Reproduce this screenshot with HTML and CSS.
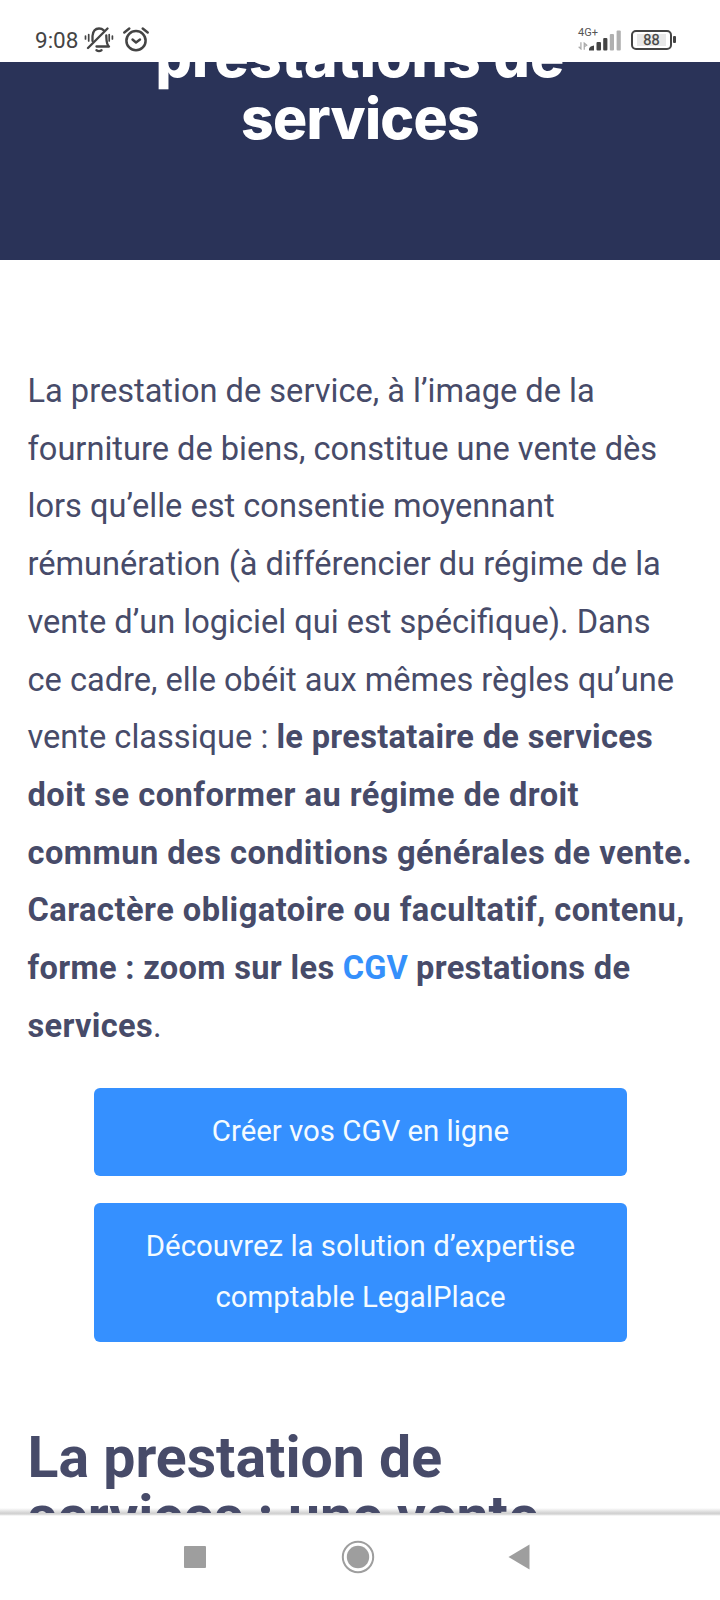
FILE: index.html
```html
<!DOCTYPE html>
<html lang="fr">
<head>
<meta charset="utf-8">
<meta name="viewport" content="width=device-width">
<title>CGV prestations de services</title>
<link rel="stylesheet" href="styles.css">
</head>
<body>
<div class="screen">
  <header class="status">
    <span class="clock">9:08</span>
    <svg class="bell" width="30" height="26" viewBox="0 0 30 26" fill="none" stroke="#444" stroke-width="2.300" stroke-linecap="round" stroke-linejoin="round">
      <path d="M1.500 9v3M4.700 7.500v6.500M25.200 7.500v6.500M28.400 9v3" stroke-width="1.700"/>
      <path d="M8.500 14V9C9 4 11.500 1.500 15 1.500c2 0 3.500.6 4.800 1.800M22.300 8.500c.2 5-.2 8.500 2.700 11H12.500"/>
      <path d="M23.500 1.500 4 21M12.500 23.200q2.500 1.700 5 0"/>
    </svg>
    <svg class="alarm" width="26" height="26" viewBox="0 0 26 26" fill="none" stroke="#444" stroke-linecap="round" stroke-linejoin="round">
      <circle cx="13" cy="13.700" r="9.600" stroke-width="2.500"/>
      <path d="M9.500 12.500 13 15.500l4-3" stroke-width="2.400"/>
      <path d="M1.300 5.500 6.300 1.500M19.700 1.500l5 4" stroke-width="2.400"/>
    </svg>
    <div class="network">
      <span class="generation">4G+</span>
      <svg width="10" height="8" viewBox="0 0 12 9" fill="none" stroke="#aaa" stroke-width="1.500"><path d="M3.500 0v8L.8 5.500M7.500 9V1l3 2.500-3 2"/></svg>
    </div>
    <svg class="signal" width="32" height="21" viewBox="0 0 32 21">
      <g fill="#444"><path d="M0 20.500v-2q1-2.500 5-3v5z"/><rect x="7.500" y="12" width="4.500" height="8.500" rx="1"/><rect x="14.200" y="8" width="4.200" height="12.500" rx="1"/></g>
      <g fill="#b0b0b0"><rect x="20.800" y="4" width="4.200" height="16.500" rx="1"/><rect x="27.600" y="0.500" width="4.200" height="20" rx="1"/></g>
    </svg>
    <div class="battery"><span class="level">88</span></div>
  </header>
  <main class="page">
    <section class="hero"><h1><span class="first">prestations de</span><br>services</h1></section>
    <article class="content">
      <p class="intro">La prestation de service, à l’image de la<br>fourniture de biens, constitue une vente dès<br>lors qu’elle est consentie moyennant<br>rémunération (à différencier du régime de la<br>vente d’un logiciel qui est spécifique). Dans<br>ce cadre, elle obéit aux mêmes règles qu’une<br>vente classique : <b>le prestataire de services<br><span class="wide">doit se conformer au régime de droit<br>commun des conditions générales de vente.<br>Caractère obligatoire ou facultatif, contenu,</span><br>forme : zoom sur les <a class="link">CGV</a> prestations de<br>services</b>.</p>
      <div class="actions">
        <a class="button">Créer vos CGV en ligne</a>
        <a class="button">Découvrez la solution d’expertise<br>comptable LegalPlace</a>
      </div>
      <h2>La prestation de<br>services : une vente</h2>
    </article>
  </main>
  <nav class="navbar">
    <svg width="22" height="22" viewBox="0 0 22 22"><rect width="22" height="22" rx="1" fill="#9e9e9e"/></svg>
    <svg class="home" width="34" height="34" viewBox="0 0 34 34"><circle cx="17" cy="17" r="15.200" fill="none" stroke="#9e9e9e" stroke-width="2"/><circle cx="17" cy="17" r="11.200" fill="#9e9e9e"/></svg>
    <svg class="back" width="22" height="26" viewBox="0 0 22 26"><path d="M.5 13 21.500.5v25z" fill="#9e9e9e"/></svg>
  </nav>
</div>
</body>
</html>
```
FILE: styles.css
```css
* { box-sizing: border-box; }
body { margin: 0; background: #fff; font-family: Roboto, sans-serif; color: #474b69; }
.screen { width: 720px; height: 1600px; display: flex; flex-direction: column; overflow: hidden; }

.status { flex: none; height: 62px; display: flex; align-items: flex-start; padding: 28px 0 0 35px; color: #444; }
.clock { width: 49px; font-size: 22.500px; line-height: 25px; }
.bell { margin-top: -1px; }
.alarm { margin: -1px 0 0 9px; }
.network { width: 22px; margin: -1px 0 0 429px; display: flex; flex-direction: column; }
.generation { font-size: 11px; line-height: 12px; height: 15px; color: #555; }
.signal { margin: 2px 0 0 -11px; }
.battery { position: relative; width: 41px; height: 20px; margin: 2px 0 0 10px; border: 2.500px solid #444; border-radius: 5px; display: flex; align-items: center; justify-content: center; }
.battery::after { content: ""; position: absolute; right: -6px; top: 4px; width: 3px; height: 7px; border-radius: 1px; background: #444; }
.level { width: 29px; height: 12px; text-align: center; font-size: 14.500px; line-height: 13px; font-weight: 400; -webkit-text-stroke: 0.300px #444; background: #e8e8e8; }

.page { flex: none; height: 1451px; overflow: hidden; background: linear-gradient(to top, #d2d2d2, #fff 5px); }
.hero { height: 198px; overflow: hidden; background: #2a3358; color: #fff; text-align: center; }
.hero h1 { margin: -36px 0 0; font: 800 57px/61.500px Inter, sans-serif; letter-spacing: -0.700px; }
.first { letter-spacing: 0.200px; }
.content { padding: 103px 20px 0 27.500px; }
.intro { margin: 0; font-size: 32.600px; line-height: 57.700px; white-space: nowrap; }
.intro b { letter-spacing: 0.320px; }
.intro .wide { letter-spacing: 0.480px; }
.link { color: #3590fb; letter-spacing: 0; }
.actions { width: 533px; margin: 33px 0 0 66.500px; display: flex; flex-direction: column; gap: 27px; }
.button { padding: 18px 0 18.500px; border-radius: 6px; background: #3590ff; color: #f4fbff; text-align: center; font-size: 29.400px; line-height: 51.200px; white-space: nowrap; }
h2 { margin: 86px 0 0; font-size: 57.200px; line-height: 59px; font-weight: 700; white-space: nowrap; }

.navbar { flex: none; height: 87px; display: flex; align-items: center; padding: 1px 0 0 184px; background: linear-gradient(#d2d2d2 1px, #fff 3px); }
.home { margin-left: 135px; }
.back { margin-left: 133px; }
```
